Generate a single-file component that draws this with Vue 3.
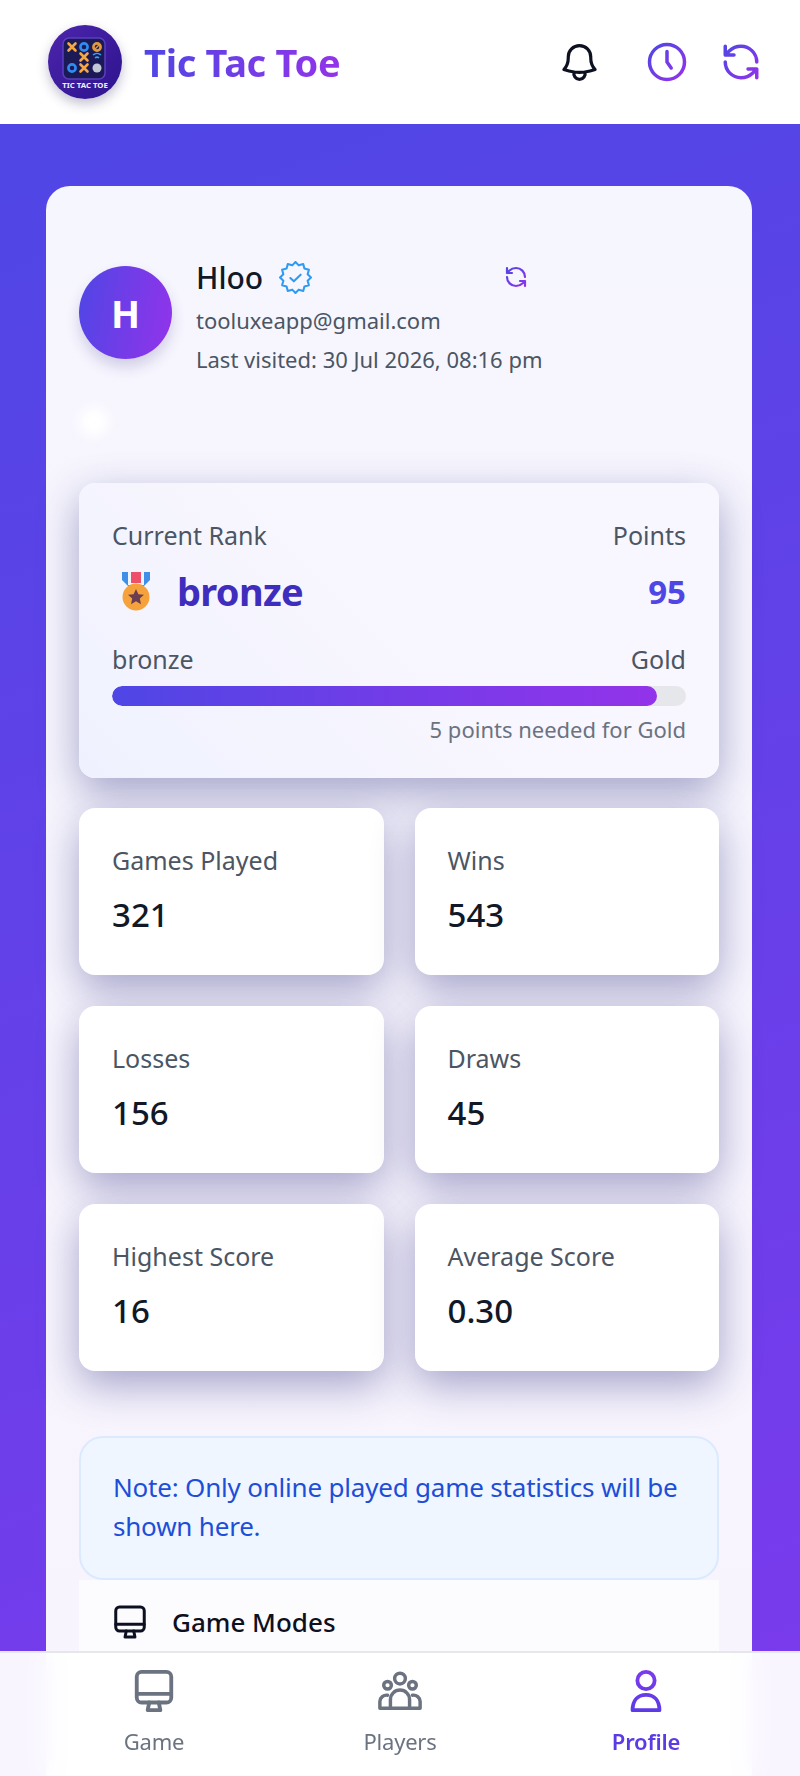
<template>
  <div class="screen">
    <!-- top bar -->
    <header class="topbar">
      <div class="brand">
        <div class="logo">
          <svg viewBox="0 0 74 74" width="74" height="74">
            <defs>
              <linearGradient id="logoBg" x1="0" y1="0" x2="1" y2="1">
                <stop offset="0" stop-color="#4d25ad" />
                <stop offset="1" stop-color="#2c138c" />
              </linearGradient>
            </defs>
            <circle cx="37" cy="37" r="37" fill="url(#logoBg)" />
            <rect x="15" y="13" width="42" height="41" rx="6" fill="#1c1a56" stroke="#5a3fc0" stroke-width="1.5" />
            <g fill="none" stroke-width="2.600" stroke-linecap="round">
              <path d="M20.500 18.500l7 7m0-7l-7 7M32.500 28.500l7 7m0-7l-7 7M32.500 39.500l7 7m0-7l-7 7" stroke="#f5a742" />
              <circle cx="36" cy="22" r="3.600" stroke="#2f8cf0" />
              <circle cx="24" cy="43" r="3.600" stroke="#2f8cf0" />
              <circle cx="49" cy="22" r="3.600" stroke="#e39a3c" />
              <path d="M47 24l4-4" stroke="#e39a3c" stroke-width="1.500" />
            </g>
            <path d="M45 30a6 6 0 0 1 8 0M47 33a3 3 0 0 1 4 0" fill="none" stroke="#37a6ef" stroke-width="1.500" />
            <circle cx="49" cy="43" r="4.500" fill="#c3c8d6" />
            <text x="37" y="63" class="logo-text" text-anchor="middle">TIC TAC TOE</text>
          </svg>
        </div>
        <span class="brand-name">Tic Tac Toe</span>
      </div>
      <div class="top-actions">
        <svg class="bell" viewBox="0 0 24 24" width="45" height="45" fill="none" stroke="#0d1020" stroke-width="1.700" stroke-linecap="round" stroke-linejoin="round">
          <path d="M14.857 17.082a23.848 23.848 0 0 0 5.454-1.31A8.967 8.967 0 0 1 18 9.75V9A6 6 0 0 0 6 9v.75a8.967 8.967 0 0 1-2.312 6.022c1.733.64 3.56 1.085 5.455 1.31m5.714 0a24.255 24.255 0 0 1-5.714 0m5.714 0a3 3 0 1 1-5.714 0" />
        </svg>
        <svg class="clock" viewBox="0 0 24 24" width="42" height="42" fill="none" stroke="url(#iconGrad)" stroke-width="2" stroke-linecap="round" stroke-linejoin="round">
          <defs>
            <linearGradient id="iconGrad" gradientUnits="userSpaceOnUse" x1="2" y1="2" x2="22" y2="22">
              <stop offset="0" stop-color="#4f46e5" />
              <stop offset="1" stop-color="#9333ea" />
            </linearGradient>
          </defs>
          <circle cx="12" cy="12" r="10" />
          <path d="M12 6v6l2.400 3.400" />
        </svg>
        <svg class="sync" viewBox="0 0 24 24" width="42" height="42" fill="none" stroke="url(#iconGrad)" stroke-width="2" stroke-linecap="round" stroke-linejoin="round">
          <path :d="syncPath" />
        </svg>
      </div>
    </header>

    <main class="content">
      <section class="card">
        <div class="profile">
          <div class="avatar">H</div>
          <div class="who">
            <div class="name-row">
              <span class="name">Hloo</span>
              <svg class="badge" viewBox="0 0 32 32" width="33" height="33" fill="none" stroke="#2f9bf0" stroke-width="2" stroke-linejoin="round" stroke-linecap="round">
                <polygon :points="badgePoints" />
                <path d="M11 16.500l3.400 3.200 6.600-6.400" />
              </svg>
              <svg class="mini-sync" viewBox="0 0 24 24" width="24" height="24" fill="none" stroke="url(#iconGrad)" stroke-width="2.200" stroke-linecap="round" stroke-linejoin="round">
                <path :d="syncPath" />
              </svg>
            </div>
            <div class="sub">tooluxeapp@gmail.com</div>
            <div class="sub">Last visited: 30 Jul 2026, 08:16 pm</div>
          </div>
        </div>
        <div class="spot"></div>

        <div class="rank">
          <div class="split muted">
            <span>Current Rank</span>
            <span>Points</span>
          </div>
          <div class="split rank-main">
            <div class="rank-name">
              <svg viewBox="0 0 28 39" width="28" height="39">
                <path d="M0 0h28v8l-7 7H7L0 8z" fill="#3f8fe8" />
                <path d="M6 0h16v13H6z" fill="#f2f4fb" />
                <rect x="9" y="0" width="10" height="11" fill="#ee4f6b" />
                <circle cx="14" cy="25" r="13.500" fill="#f5a23c" />
                <path d="M14 17l2.400 5.200 5.600.600-4.200 3.800 1.200 5.600-5-2.900-5 2.900 1.200-5.600-4.200-3.800 5.600-.600z" fill="#6b3d55" />
              </svg>
              <span>bronze</span>
            </div>
            <span class="points">95</span>
          </div>
          <div class="split muted tiers">
            <span>bronze</span>
            <span>Gold</span>
          </div>
          <div class="track">
            <div class="fill" :style="{ width: progress + '%' }"></div>
          </div>
          <div class="need">5 points needed for Gold</div>
        </div>

        <div class="stats">
          <div v-for="s in stats" :key="s.label" class="stat">
            <div class="stat-label">{{ s.label }}</div>
            <div class="stat-value">{{ s.value }}</div>
          </div>
        </div>

        <div class="note">Note: Only online played game statistics will be shown here.</div>

        <div class="modes">
          <svg viewBox="0 0 24 24" width="36" height="36" fill="none" stroke="#0d1020" stroke-width="2" stroke-linecap="round" stroke-linejoin="round">
            <rect x="2.500" y="2" width="19" height="16" rx="2.500" />
            <path d="M2.500 13.500h19M9.500 18l-.8 4h6.600l-.8-4" />
          </svg>
          <span>Game Modes</span>
        </div>
      </section>
    </main>

    <!-- bottom nav -->
    <nav class="tabs">
      <div class="tab">
        <svg viewBox="0 0 24 24" width="46" height="46" fill="none" stroke="#6b7280" stroke-width="2" stroke-linecap="round" stroke-linejoin="round">
          <rect x="3" y="2" width="18" height="16" rx="2.500" />
          <path d="M3 13.500h18M9.500 18l-.8 4h6.600l-.8-4" />
        </svg>
        <span>Game</span>
      </div>
      <div class="tab">
        <svg viewBox="0 0 24 24" width="46" height="46" fill="none" stroke="#6b7280" stroke-width="1.800" stroke-linecap="round" stroke-linejoin="round">
          <circle cx="12" cy="5.500" r="2.800" />
          <circle cx="5.500" cy="9" r="2" />
          <circle cx="18.500" cy="9" r="2" />
          <path d="M1.500 21v-3.500a3.500 3.500 0 0 1 4-3.300M22.500 21v-3.500a3.500 3.500 0 0 0-4-3.300M7 21v-4.500a5 5 0 0 1 10 0V21M1.500 21h21" />
        </svg>
        <span>Players</span>
      </div>
      <div class="tab active">
        <svg viewBox="0 0 24 24" width="46" height="46" fill="none" stroke="url(#navGrad)" stroke-width="2" stroke-linecap="round" stroke-linejoin="round">
          <defs>
            <linearGradient id="navGrad" gradientUnits="userSpaceOnUse" x1="12" y1="1" x2="12" y2="23">
              <stop offset="0" stop-color="#7c3aed" />
              <stop offset="1" stop-color="#5b3be6" />
            </linearGradient>
          </defs>
          <circle cx="12" cy="6.500" r="4.500" />
          <path d="M5 22c0-5 2.600-8 7-8s7 3 7 8z" />
        </svg>
        <span>Profile</span>
      </div>
    </nav>
  </div>
</template>

<script setup>
const syncPath =
  'M21 12a9 9 0 0 0-9-9 9.75 9.75 0 0 0-6.74 2.74L3 8M3 3v5h5M3 12a9 9 0 0 0 9 9 9.75 9.75 0 0 0 6.74-2.74L21 16M16 16h5v5'

const progress = 95

const stats = [
  { label: 'Games Played', value: '321' },
  { label: 'Wins', value: '543' },
  { label: 'Losses', value: '156' },
  { label: 'Draws', value: '45' },
  { label: 'Highest Score', value: '16' },
  { label: 'Average Score', value: '0.30' },
]

// zigzag outline of the verified badge
const badgePoints = Array.from({ length: 24 }, (_, i) => {
  const r = i % 2 ? 12.2 : 15
  const a = (i * Math.PI) / 12
  return `${(16 + r * Math.sin(a)).toFixed(2)},${(16 - r * Math.cos(a)).toFixed(2)}`
}).join(' ')
</script>

<style scoped>
.screen {
  width: 800px;
  height: 1776px;
  display: flex;
  flex-direction: column;
  overflow: hidden;
  font-family: 'Noto Sans', 'Open Sans', sans-serif;
  background: #fff;
}
.topbar {
  height: 124px;
  flex: none;
  display: flex;
  align-items: center;
  justify-content: space-between;
  padding: 0 38px 0 48px;
  background: #fff;
  box-sizing: border-box;
}
.brand {
  display: flex;
  align-items: center;
  gap: 22px;
}
.logo {
  width: 74px;
  height: 74px;
  border-radius: 50%;
  box-shadow: 0 5px 12px rgba(40, 30, 90, 0.28);
}
.logo svg {
  display: block;
}
.logo-text {
  font-size: 7.800px;
  font-weight: 700;
  fill: #eef0fb;
}
.brand-name {
  font-size: 38px;
  line-height: 52px;
  font-weight: 700;
  letter-spacing: -0.3px;
  background: linear-gradient(90deg, #4f46e5, #9333ea);
  -webkit-background-clip: text;
  background-clip: text;
  color: transparent;
}
.top-actions {
  display: flex;
  align-items: center;
}
.top-actions svg {
  display: block;
}
.bell {
  margin-right: 44px;
}
.clock {
  margin-right: 32px;
}
.content {
  flex: 1;
  min-height: 0;
  padding: 62px 48px 0 46px;
  background: linear-gradient(160deg, #4f46e5, #7c3aed);
  overflow: hidden;
}
.card {
  background: linear-gradient(#f6f6fe, #f8f4fd);
  border-radius: 24px 24px 0 0;
  padding: 65px 33px 0;
  min-height: 1500px;
  box-sizing: border-box;
}
.profile {
  display: flex;
  align-items: center;
  gap: 24px;
}
.avatar {
  width: 93px;
  height: 93px;
  flex: none;
  border-radius: 50%;
  background: linear-gradient(100deg, #4f46e5, #9333ea);
  color: #fff;
  font-size: 38px;
  font-weight: 700;
  display: flex;
  align-items: center;
  justify-content: center;
  box-shadow: 0 8px 14px rgba(60, 50, 130, 0.2);
}
.who {
  flex: 1;
  margin-top: 6px;
}
.name-row {
  display: flex;
  align-items: center;
  height: 40px;
}
.name {
  font-size: 30px;
  font-weight: 500;
  color: #111827;
}
.badge {
  margin-left: 16px;
}
.mini-sync {
  margin-left: 192px;
}
.sub {
  margin-top: 8px;
  font-size: 22px;
  line-height: 30px;
  color: #4b5563;
}
.sub + .sub {
  margin-top: 9px;
}
.spot {
  width: 30px;
  height: 30px;
  margin: 33px 0 0 0;
  border-radius: 50%;
  background: #fff;
  filter: blur(6px);
}
.rank {
  margin-top: 46px;
  height: 295px;
  box-sizing: border-box;
  padding: 35px 33px;
  border-radius: 16px;
  background: linear-gradient(45deg, #eff2fe, #f8f6fe 50%);
  box-shadow: 0 14px 40px rgba(50, 50, 130, 0.42);
}
.split {
  display: flex;
  justify-content: space-between;
  align-items: center;
}
.muted {
  font-size: 25px;
  line-height: 34px;
  color: #4b5563;
}
.rank-main {
  margin-top: 10px;
  height: 58px;
}
.rank-name {
  display: flex;
  align-items: center;
  gap: 27px;
  margin-left: 10px;
  font-size: 38px;
  font-weight: 700;
  letter-spacing: -0.7px;
  color: #3f2dbd;
}
.rank-name svg {
  display: block;
}
.points {
  font-size: 33px;
  font-weight: 700;
  color: #4f46e5;
}
.tiers {
  margin-top: 22px;
}
.track {
  margin-top: 10px;
  height: 20px;
  border-radius: 10px;
  background: #e5e7eb;
  overflow: hidden;
}
.fill {
  height: 100%;
  border-radius: 10px;
  background: linear-gradient(90deg, #4f46e5, #9333ea);
}
.need {
  margin-top: 8px;
  text-align: right;
  font-size: 22px;
  line-height: 30px;
  color: #6b7280;
}
.stats {
  margin-top: 30px;
  display: grid;
  grid-template-columns: 1fr 1fr;
  gap: 31px;
}
.stat {
  height: 167px;
  box-sizing: border-box;
  padding: 35px 33px;
  background: #fff;
  border-radius: 16px;
  box-shadow: 0 14px 40px rgba(50, 50, 130, 0.42);
}
.stat-label {
  font-size: 25px;
  line-height: 34px;
  color: #4b5563;
}
.stat-value {
  margin-top: 16px;
  font-size: 33px;
  line-height: 44px;
  font-weight: 500;
  color: #111827;
}
.note {
  margin-top: 65px;
  height: 144px;
  box-sizing: border-box;
  padding: 30px 20px 30px 32px;
  border: 2px solid #dbeafe;
  border-radius: 24px;
  background: #eff6ff;
  font-size: 26px;
  line-height: 39px;
  letter-spacing: -0.2px;
  color: #1d4ed8;
}
.modes {
  display: flex;
  align-items: center;
  gap: 24px;
  padding: 24px 33px 200px;
  background: #fcfcff;
  font-size: 26px;
  font-weight: 500;
  color: #0d1020;
}
.modes svg {
  display: block;
}
.tabs {
  flex: none;
  height: 125px;
  box-sizing: border-box;
  margin-top: -125px;
  position: relative;
  display: grid;
  grid-template-columns: repeat(3, 1fr);
  padding: 0 31px;
  border-top: 2px solid #e5e7eb;
  background: rgba(255, 255, 255, 0.95);
  backdrop-filter: blur(14px);
}
.tab {
  display: flex;
  flex-direction: column;
  align-items: center;
  padding-top: 15px;
  font-size: 22px;
  line-height: 30px;
  letter-spacing: -0.2px;
  color: #6b7280;
}
.tab svg {
  display: block;
  margin-bottom: 12px;
}
.tab.active {
  color: #5b3be6;
  font-weight: 600;
}
</style>
